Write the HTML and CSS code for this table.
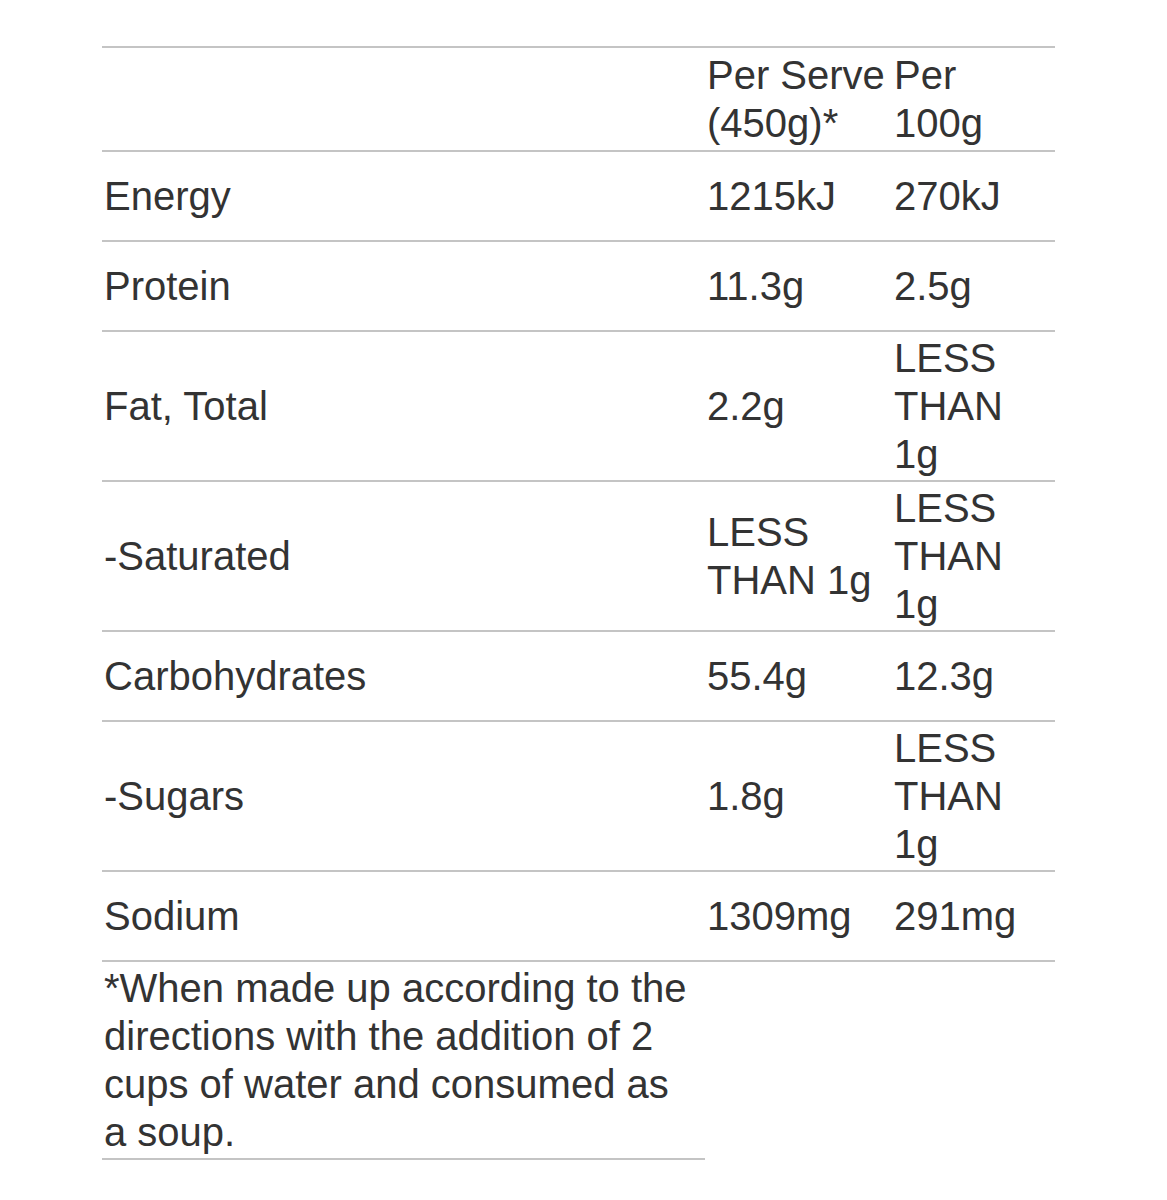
FILE: index.html
```html
<!DOCTYPE html>
<html>
<head>
<meta charset="utf-8">
<link rel="stylesheet" href="styles.css">
</head>
<body>
<table class="nutrition">
  <colgroup>
    <col class="c-label">
    <col class="c-serve">
    <col class="c-100">
  </colgroup>
  <tr class="head">
    <td></td>
    <td>Per Serve (450g)*</td>
    <td>Per 100g</td>
  </tr>
  <tr><td>Energy</td><td>1215kJ</td><td>270kJ</td></tr>
  <tr><td>Protein</td><td>11.3g</td><td>2.5g</td></tr>
  <tr><td>Fat, Total</td><td>2.2g</td><td>LESS THAN 1g</td></tr>
  <tr><td>-Saturated</td><td>LESS THAN 1g</td><td>LESS THAN 1g</td></tr>
  <tr><td>Carbohydrates</td><td>55.4g</td><td>12.3g</td></tr>
  <tr><td>-Sugars</td><td>1.8g</td><td>LESS THAN 1g</td></tr>
  <tr><td>Sodium</td><td>1309mg</td><td>291mg</td></tr>
  <tr class="foot"><td>*When made up according to the directions with the addition of 2 cups of water and consumed as a soup.</td></tr>
</table>
</body>
</html>
```
FILE: styles.css
```css
html, body {
  margin: 0;
  padding: 0;
  background: #ffffff;
}
body {
  padding: 46px 0 0 102px;
  font-family: "Liberation Sans", Arial, sans-serif;
  font-size: 40px;
  line-height: 48px;
  color: #333333;
}
.nutrition {
  border-collapse: collapse;
  table-layout: fixed;
  width: 953px;
}
.c-label { width: 603px; }
.c-serve { width: 187px; }
.c-100 { width: 163px; }
.nutrition td {
  padding: 2px 4px 2px 2px;
  border-bottom: 2px solid #c4c4c4;
  vertical-align: middle;
  height: 84px;
}
.nutrition tr.head td {
  border-top: 2px solid #c4c4c4;
  height: auto;
  padding-top: 3px;
  padding-bottom: 3px;
}
.nutrition tr.foot td {
  height: auto;
  padding-top: 2px;
  padding-bottom: 2px;
}
```
